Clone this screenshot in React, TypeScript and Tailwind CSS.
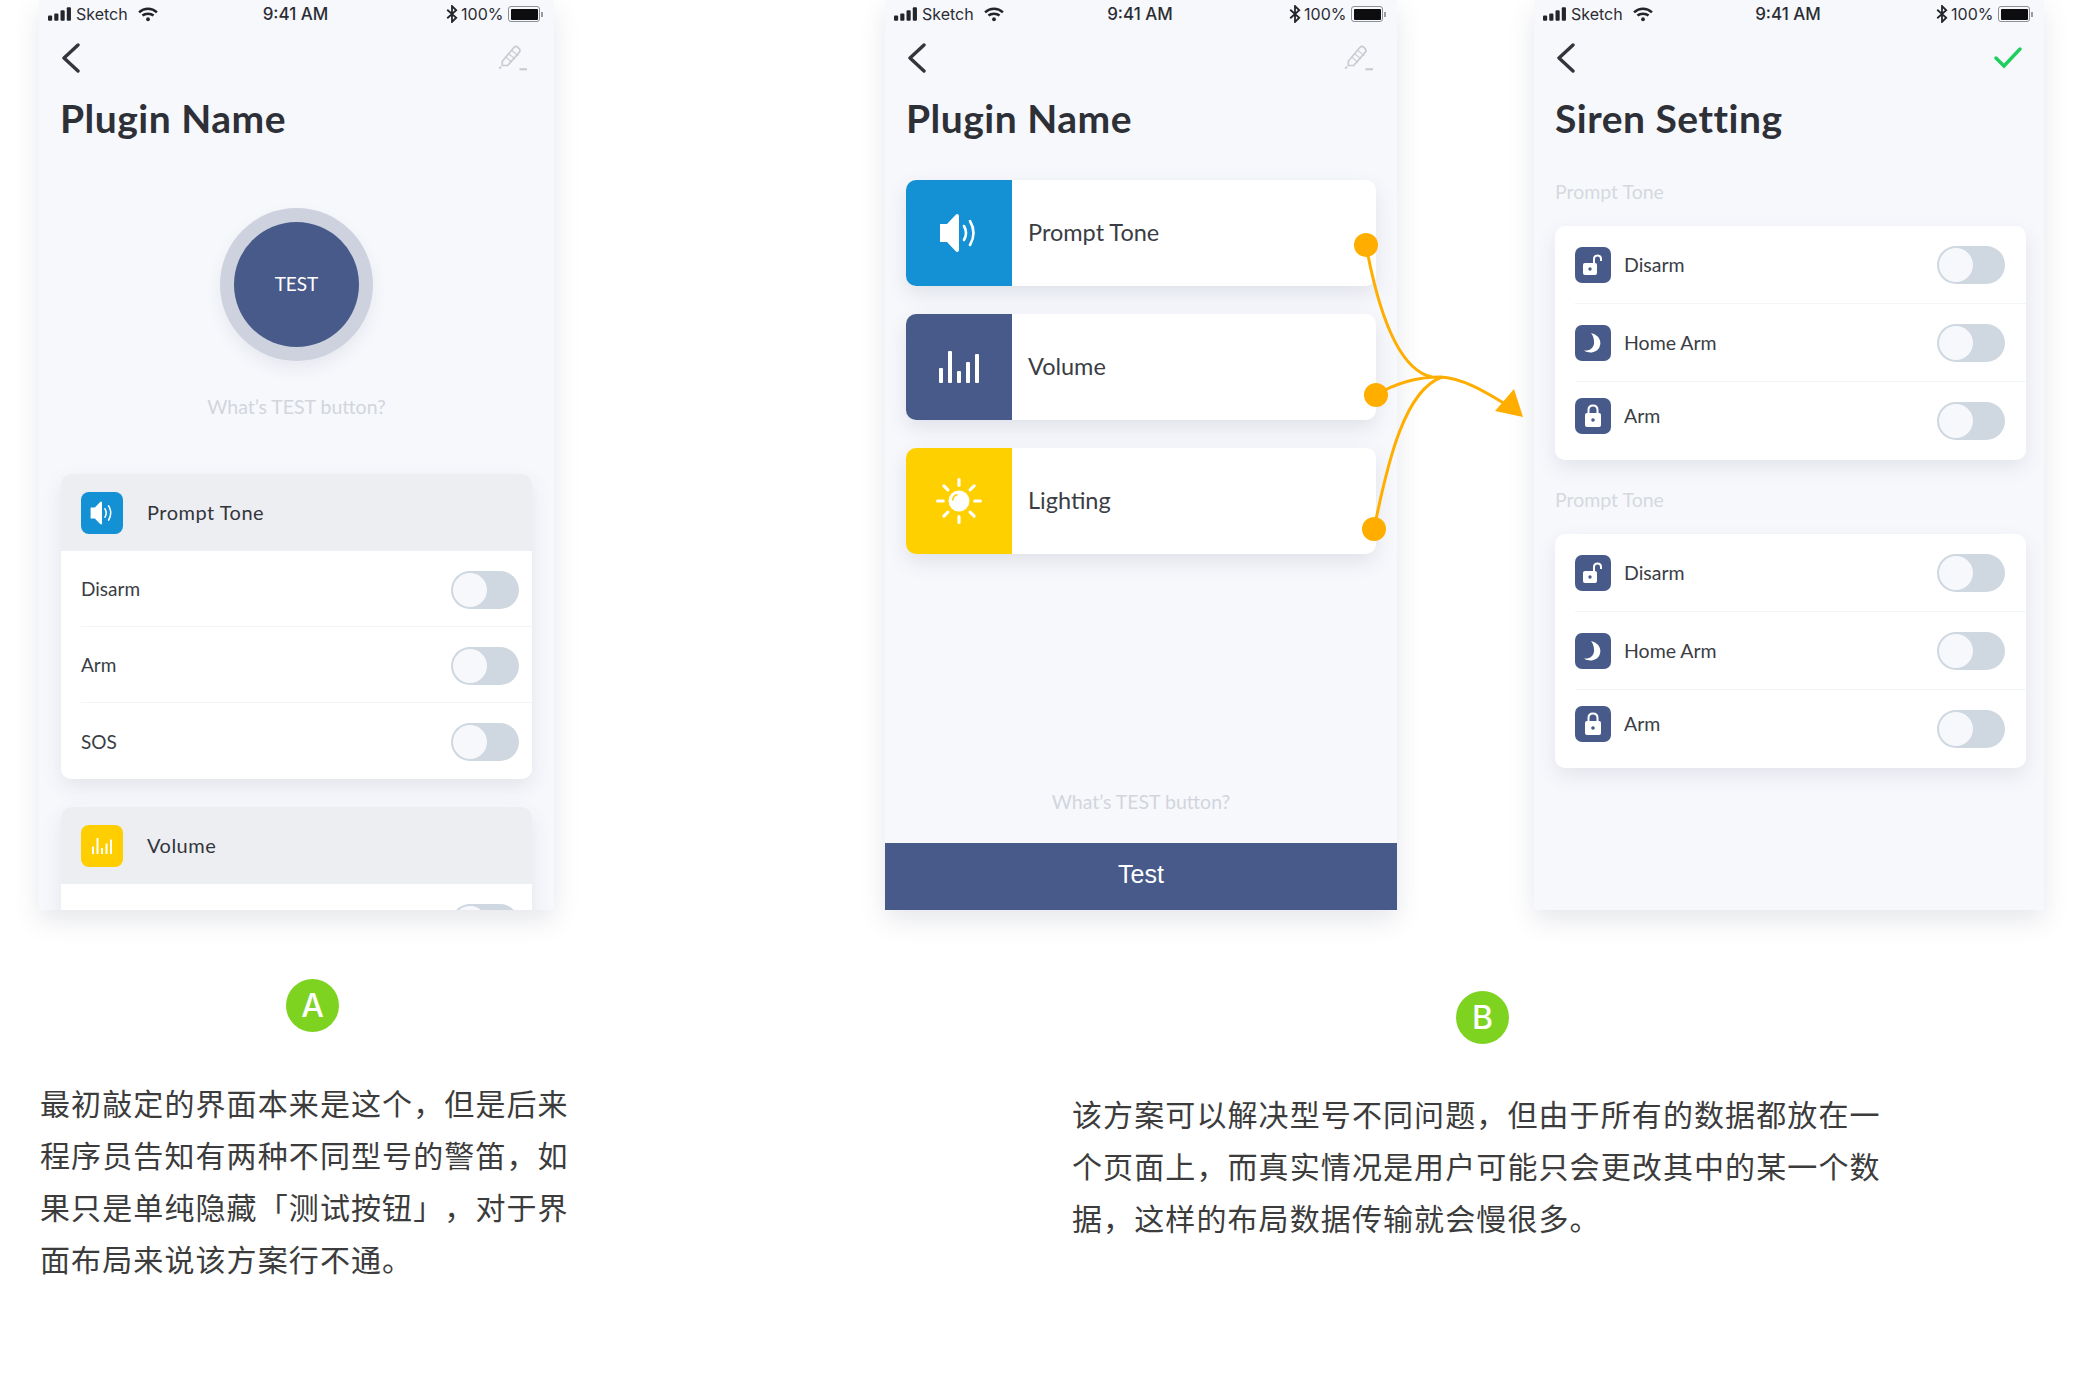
import React from "react";

const ui = { fontFamily: '"Lato", "Noto Sans", sans-serif' };
const sys = { fontFamily: '"Inter", "Liberation Sans", sans-serif' };
const cjk = { fontFamily: '"Noto Sans CJK SC", sans-serif' };

function StatusBar() {
  return (
    <div className="flex h-[28px] items-center justify-between pl-[9px] pr-[11px] text-[17px] text-[#2b2d33]" style={sys}>
      <div className="flex w-[160px] items-center">
        <svg width="24" height="14" viewBox="0 0 23 13" fill="#23252b">
          <rect x="0" y="8" width="4" height="5" rx="1" />
          <rect x="6" y="6" width="4" height="7" rx="1" />
          <rect x="12" y="3" width="4" height="10" rx="1" />
          <rect x="18" y="0" width="4" height="13" rx="1" />
        </svg>
        <span className="ml-[4px] text-[16px]">Sketch</span>
        <svg className="ml-[10px]" width="20" height="15" viewBox="0 0 19 14" fill="none" stroke="#23252b" strokeWidth="2.4">
          <path d="M1 5 C6 0.5 13 0.5 18 5" />
          <path d="M4.2 8 C7 5.6 12 5.6 14.8 8" />
          <circle cx="9.5" cy="11.5" r="1.8" fill="#23252b" stroke="none" />
        </svg>
      </div>
      <span className="pt-[1px] text-[17px] font-medium">9:41 AM</span>
      <div className="flex w-[160px] items-center justify-end">
        <svg width="12" height="18" viewBox="0 0 11 17" fill="none" stroke="#23252b" strokeWidth="1.7">
          <path d="M1 4.5 L9.5 12 L5.5 16 V1 L9.5 5 L1 12.5" />
        </svg>
        <span className="ml-[3px] text-[16px]">100%</span>
        <div className="ml-[5px] flex h-[16px] w-[32px] items-center rounded-[3px] border border-[#8e9096] p-[1.5px]">
          <div className="h-full w-full rounded-[1px] bg-[#0d0d10]" />
        </div>
        <div className="ml-[1px] h-[5px] w-[1.5px] bg-[#9a9ca2]" />
      </div>
    </div>
  );
}

function Chevron() {
  return (
    <svg width="20" height="30" viewBox="0 0 20 30" fill="none" stroke="#33353c" strokeWidth="3.4" strokeLinecap="round" strokeLinejoin="round">
      <path d="M17 2 L3 15 L17 28" />
    </svg>
  );
}

function Pencil() {
  return (
    <svg width="30" height="28" viewBox="0 0 28 26" fill="none" stroke="#c9cbd1" strokeWidth="1.6" strokeLinejoin="round">
      <path d="M4 16 L15 3 Q16.500 1.500 18.500 3 L20 4.500 Q21 6 20 7.500 L9 20 L4 20 Z" />
      <path d="M7 12 L13 17 M10 9 L16 14 M13 6 L19 11" strokeWidth="1" />
      <path d="M1 23 L3 21" />
      <path d="M20 23.500 H27" strokeWidth="2" />
    </svg>
  );
}

function Check() {
  return (
    <svg width="28" height="22" viewBox="0 0 28 22" fill="none" stroke="#1fce5f" strokeWidth="3.4" strokeLinecap="round">
      <path d="M2 11 L10 19 L26 2" />
    </svg>
  );
}

function Speaker({ size }: { size: number }) {
  return (
    <svg width={size} height={size} viewBox="0 0 40 40" fill="none">
      <path d="M1 11 H8 L17 1.500 Q19.500 0 20 3 V37 Q19.500 40 17 38.500 L8 29 H1 Z" fill="#fff" />
      <path d="M25 13 Q29 20 25 27" stroke="#fff" strokeWidth="2.6" strokeLinecap="round" />
      <path d="M31 8 Q38 20 31 32" stroke="#fff" strokeWidth="2.6" strokeLinecap="round" />
    </svg>
  );
}

function Bars({ size }: { size: number }) {
  return (
    <svg width={size} height={size} viewBox="0 0 40 40" fill="#fff">
      <rect x="0" y="21" width="4" height="15" rx="1" />
      <rect x="9" y="4" width="4" height="32" rx="1" />
      <rect x="18" y="24" width="4" height="12" rx="1" />
      <rect x="27" y="15" width="4" height="21" rx="1" />
      <rect x="36" y="7" width="4" height="29" rx="1" />
    </svg>
  );
}

function Sun({ size }: { size: number }) {
  const rays = [0, 45, 90, 135, 180, 225, 270, 315];
  return (
    <svg width={size} height={size} viewBox="0 0 44 44" fill="none">
      <circle cx="22" cy="22" r="10" fill="#fff" />
      <path d="M16 21 Q16.500 17 20 16" stroke="#ffd000" strokeWidth="1.5" strokeLinecap="round" />
      {rays.map((a) => (
        <path key={a} d="M22 1.500 V7" stroke="#fff" strokeWidth="3" strokeLinecap="round" transform={`rotate(${a} 22 22)`} />
      ))}
    </svg>
  );
}

function Unlock() {
  return (
    <svg width="22" height="22" viewBox="0 0 22 22" fill="none">
      <rect x="1" y="9" width="14" height="12" rx="2" fill="#fff" />
      <circle cx="8" cy="15" r="1.700" fill="#475a8a" />
      <path d="M12 9 V5 Q12 1.500 15.500 1.500 Q19 1.500 19 5 V7" stroke="#fff" strokeWidth="2" />
    </svg>
  );
}

function Lock() {
  return (
    <svg width="20" height="24" viewBox="0 0 20 24" fill="none">
      <rect x="2" y="9" width="16" height="14" rx="2" fill="#fff" />
      <circle cx="10" cy="16" r="1.800" fill="#475a8a" />
      <path d="M5.500 9 V6 Q5.500 1.500 10 1.500 Q14.500 1.500 14.500 6 V9" stroke="#fff" strokeWidth="2" />
    </svg>
  );
}

function Moon() {
  return (
    <svg width="20" height="22" viewBox="0 0 20 22" fill="#fff">
      <path d="M8 1 C16 3 19 9 16.500 15 C14.500 20 7 22.500 1 18.500 C7 19 10.500 16 11 11.500 C11.400 7.500 10 3.500 8 1 Z" />
    </svg>
  );
}

function Toggle() {
  return (
    <div className="flex h-[38px] w-[68px] shrink-0 items-center rounded-full bg-[#cfd7e0] p-[2px]">
      <div className="h-[34px] w-[34px] rounded-full bg-[#f7f8fc]" />
    </div>
  );
}

function Header({ title, pr }: { title: string; pr: string }) {
  return (
    <>
      <StatusBar />
      <div className={`flex h-[60px] items-center justify-between pl-[22px] ${pr}`}>
        <Chevron />
        {title === "Siren Setting" ? <Check /> : <Pencil />}
      </div>
      <div className="mt-[7px] pl-[21px] text-[39px] leading-[46px] font-bold text-[#2e3038] tracking-[0.5px]" style={ui}>
        {title}
      </div>
    </>
  );
}

function SectionCard({ icon, bg, title, rows, cut }: { icon: React.ReactNode; bg: string; title: string; rows: string[]; cut?: boolean }) {
  return (
    <div className="mx-[22px] overflow-hidden rounded-[10px] bg-white shadow-[0_8px_20px_rgba(60,70,100,0.1)]" style={ui}>
      <div className="flex h-[77px] items-center bg-[#edeef1] px-[20px]">
        <div className={`flex h-[42px] w-[42px] items-center justify-center rounded-[8px] ${bg}`}>{icon}</div>
        <span className="mb-[2px] ml-[24px] text-[20px] tracking-[0.5px] text-[#33353c]">{title}</span>
      </div>
      {rows.map((r, i) => (
        <div key={r} className={`ml-[20px] flex h-[76px] items-center justify-between pt-[2px] pr-[13px] text-[19px] text-[#3b3d44] ${i < rows.length - 1 ? "border-b border-[#f3f4f6]" : ""}`}>
          <span>{r}</span>
          <Toggle />
        </div>
      ))}
      {cut && (
        <div className="ml-[20px] flex h-[76px] items-center justify-end pt-[2px] pr-[13px]">
          <Toggle />
        </div>
      )}
    </div>
  );
}

function PhoneA() {
  return (
    <div className="h-[910px] w-[515px] shrink-0 bg-[#f7f8fc] shadow-[0_10px_24px_rgba(60,70,100,0.13)]">
      <div className="h-[910px] overflow-hidden">
        <Header title="Plugin Name" pr="pr-[26px]" />
        <div className="mt-[67px] flex justify-center">
          <div className="flex h-[153px] w-[153px] items-center justify-center rounded-full bg-[#cdd2de] shadow-[0_8px_16px_rgba(60,70,100,0.08)]">
            <div className="flex h-[125px] w-[125px] items-center justify-center rounded-full bg-[#475a8a] text-[19px] text-white" style={ui}>TEST</div>
          </div>
        </div>
        <div className="mt-[34px] text-center text-[19.500px] leading-[24px] text-[#d2d5dc]" style={ui}>What’s TEST button?</div>
        <div className="mt-[55px] flex flex-col gap-[28px]">
          <SectionCard icon={<Speaker size={24} />} bg="bg-[#1490d4]" title="Prompt Tone" rows={["Disarm", "Arm", "SOS"]} />
          <SectionCard icon={<Bars size={20} />} bg="bg-[#ffce00]" title="Volume" rows={[]} cut />
        </div>
      </div>
    </div>
  );
}

function FeatureCard({ icon, bg, title }: { icon: React.ReactNode; bg: string; title: string }) {
  return (
    <div className="flex h-[106px] overflow-hidden rounded-[10px] bg-white shadow-[0_8px_20px_rgba(60,70,100,0.12)]" style={ui}>
      <div className={`flex w-[106px] items-center justify-center ${bg}`}>{icon}</div>
      <span className="ml-[16px] self-center text-[23.500px] text-[#3b3d44]">{title}</span>
    </div>
  );
}

function PhoneB() {
  return (
    <div className="flex h-[910px] w-[512px] shrink-0 flex-col bg-[#f7f8fc] shadow-[0_10px_24px_rgba(60,70,100,0.13)]">
      <Header title="Plugin Name" pr="pr-[23px]" />
      <div className="mx-[21px] mt-[39px] flex flex-col gap-[28px]">
        <FeatureCard icon={<Speaker size={40} />} bg="bg-[#1490d4]" title="Prompt Tone" />
        <FeatureCard icon={<Bars size={40} />} bg="bg-[#475a8a]" title="Volume" />
        <FeatureCard icon={<Sun size={46} />} bg="bg-[#ffd000]" title="Lighting" />
      </div>
      <div className="mt-auto text-center text-[19.500px] leading-[24px] text-[#d2d5dc]" style={ui}>What’s TEST button?</div>
      <div className="mt-[29px] flex h-[67px] items-center justify-center bg-[#475a8a] pb-[3px] text-[25px] text-white" style={{ fontFamily: '"Liberation Sans", sans-serif' }}>Test</div>
    </div>
  );
}

function SirenRow({ icon, label, up, border }: { icon: React.ReactNode; label: string; up?: boolean; border?: boolean }) {
  return (
    <div className={`ml-[20px] flex h-[78px] items-center justify-between pr-[21px] ${border ? "border-b border-[#f3f4f6]" : ""}`}>
      <div className={`flex items-center ${up ? "-translate-y-[5px]" : ""}`}>
        <div className="flex h-[36px] w-[36px] items-center justify-center rounded-[7px] bg-[#475a8a]">{icon}</div>
        <span className="ml-[13px] text-[19.500px] text-[#3b3d44]">{label}</span>
      </div>
      <Toggle />
    </div>
  );
}

function SirenGroup() {
  return (
    <>
      <div className="ml-[21px] text-[19.500px] leading-[24px] text-[#d5d8de]" style={ui}>Prompt Tone</div>
      <div className="ml-[21px] mr-[18px] mt-[22px] overflow-hidden rounded-[10px] bg-white shadow-[0_8px_20px_rgba(60,70,100,0.1)]" style={ui}>
        <SirenRow icon={<Unlock />} label="Disarm" border />
        <SirenRow icon={<Moon />} label="Home Arm" border />
        <SirenRow icon={<Lock />} label="Arm" up />
      </div>
    </>
  );
}

function PhoneC() {
  return (
    <div className="h-[910px] w-[510px] shrink-0 bg-[#f7f8fc] shadow-[0_10px_24px_rgba(60,70,100,0.13)]">
      <Header title="Siren Setting" pr="pr-[22px]" />
      <div className="mt-[39px]"><SirenGroup /></div>
      <div className="mt-[28px]"><SirenGroup /></div>
    </div>
  );
}

function Badge({ letter }: { letter: string }) {
  return (
    <div className="flex h-[53px] w-[53px] items-center justify-center rounded-full bg-[#7ed321] text-[32px] font-medium text-white" style={sys}>{letter}</div>
  );
}

function Para({ lines }: { lines: string[] }) {
  return (
    <div className="text-[30px] leading-[52px] tracking-[1.100px] whitespace-nowrap text-[#3c3c3c] [text-spacing-trim:space-all]" style={cjk}>
      {lines.map((l) => <div key={l}>{l}</div>)}
    </div>
  );
}

export default function App() {
  return (
    <div className="relative h-[1388px] w-[2080px] overflow-hidden bg-white">
      <div className="flex pl-[39px]">
        <PhoneA />
        <div className="ml-[331px]"><PhoneB /></div>
        <div className="ml-[137px]"><PhoneC /></div>
      </div>
      <svg className="absolute top-0 left-0" width="2080" height="1000" viewBox="0 0 2080 1000" fill="none">
        <path d="M1366 245 C1378 310 1398 370 1432 377" stroke="#ffae00" strokeWidth="3" />
        <path d="M1376 395 C1396 383 1415 377 1440 377 C1465 378 1490 395 1512 408" stroke="#ffae00" strokeWidth="3" />
        <path d="M1374 529 C1388 460 1405 390 1442 377" stroke="#ffae00" strokeWidth="3" />
        <path d="M1523 417 L1495 411 L1514 389 Z" fill="#ffae00" />
        <circle cx="1366" cy="245" r="12" fill="#ffae00" />
        <circle cx="1376" cy="395" r="12" fill="#ffae00" />
        <circle cx="1374" cy="529" r="12" fill="#ffae00" />
      </svg>
      <div className="flex">
        <div className="ml-[40px] w-[540px] pt-[69px]">
          <div className="ml-[246px]"><Badge letter="A" /></div>
          <div className="mt-[44px]">
            <Para lines={["最初敲定的界面本来是这个，但是后来", "程序员告知有两种不同型号的警笛，如", "果只是单纯隐藏「测试按钮」，对于界", "面布局来说该方案行不通。"]} />
          </div>
        </div>
        <div className="ml-[492px] pt-[81px]">
          <div className="ml-[384px]"><Badge letter="B" /></div>
          <div className="mt-[43px]">
            <Para lines={["该方案可以解决型号不同问题，但由于所有的数据都放在一", "个页面上，而真实情况是用户可能只会更改其中的某一个数", "据，这样的布局数据传输就会慢很多。"]} />
          </div>
        </div>
      </div>
    </div>
  );
}
